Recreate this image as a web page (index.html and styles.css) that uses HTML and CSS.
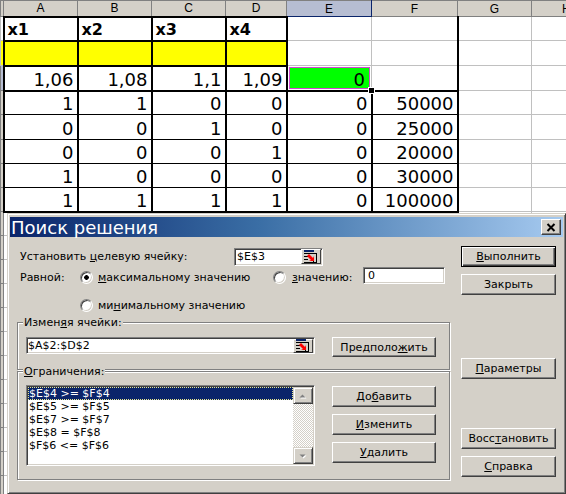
FILE: index.html
```html
<!DOCTYPE html>
<html lang="ru">
<head>
<meta charset="utf-8">
<title>Поиск решения</title>
<link rel="stylesheet" href="styles.css">
</head>
<body>
<div class="page">
  <table class="sheet">
    <colgroup>
      <col class="c-rh"><col class="c-a"><col class="c-b"><col class="c-c"><col class="c-d"><col class="c-e"><col class="c-f"><col class="c-g"><col class="c-h">
    </colgroup>
    <tr class="r-hd">
      <td class="hd rhd"></td><td class="hd">A</td><td class="hd">B</td><td class="hd">C</td><td class="hd">D</td><td class="hd hd-sel">E</td><td class="hd">F</td><td class="hd">G</td><td class="hd hd-h">H</td>
    </tr>
    <tr class="r24">
      <td class="rh rh-w"></td><td class="k lab">x1</td><td class="k lab">x2</td><td class="k lab">x3</td><td class="k lab">x4</td><td></td><td class="kr"></td><td></td><td></td>
    </tr>
    <tr class="r25">
      <td class="rh rh-y"></td><td class="k yel"></td><td class="k yel"></td><td class="k yel"></td><td class="k yel"></td><td></td><td class="kr"></td><td></td><td></td>
    </tr>
    <tr class="r25">
      <td class="rh rh-sel"></td><td class="k">1,06</td><td class="k">1,08</td><td class="k">1,1</td><td class="k">1,09</td><td class="act">0<span class="handle"></span></td><td class="kr kb"></td><td></td><td></td>
    </tr>
    <tr class="r24">
      <td class="rh"></td><td class="m kt">1</td><td class="m kt">1</td><td class="m kt">0</td><td class="m kt">0</td><td class="m kt">0</td><td class="m kt">50000</td><td></td><td></td>
    </tr>
    <tr class="r25">
      <td class="rh"></td><td class="m">0</td><td class="m">0</td><td class="m">1</td><td class="m">0</td><td class="m">0</td><td class="m">25000</td><td></td><td></td>
    </tr>
    <tr class="r24">
      <td class="rh"></td><td class="m">0</td><td class="m">0</td><td class="m">0</td><td class="m">1</td><td class="m">0</td><td class="m">20000</td><td></td><td></td>
    </tr>
    <tr class="r24">
      <td class="rh"></td><td class="m">1</td><td class="m">0</td><td class="m">0</td><td class="m">0</td><td class="m">0</td><td class="m">30000</td><td></td><td></td>
    </tr>
    <tr class="r24">
      <td class="rh"></td><td class="m mb">1</td><td class="m mb">1</td><td class="m mb">1</td><td class="m mb">1</td><td class="m mb">0</td><td class="m mb">100000</td><td></td><td></td>
    </tr>
    <tr class="r24"><td class="rh"></td><td></td><td></td><td></td><td></td><td></td><td></td><td></td><td></td></tr>
    <tr class="r24"><td class="rh"></td><td></td><td></td><td></td><td></td><td></td><td></td><td></td><td></td></tr>
    <tr class="r24"><td class="rh"></td><td></td><td></td><td></td><td></td><td></td><td></td><td></td><td></td></tr>
    <tr class="r24"><td class="rh"></td><td></td><td></td><td></td><td></td><td></td><td></td><td></td><td></td></tr>
    <tr class="r24"><td class="rh"></td><td></td><td></td><td></td><td></td><td></td><td></td><td></td><td></td></tr>
    <tr class="r24"><td class="rh"></td><td></td><td></td><td></td><td></td><td></td><td></td><td></td><td></td></tr>
    <tr class="r24"><td class="rh"></td><td></td><td></td><td></td><td></td><td></td><td></td><td></td><td></td></tr>
    <tr class="r24"><td class="rh"></td><td></td><td></td><td></td><td></td><td></td><td></td><td></td><td></td></tr>
    <tr class="r24"><td class="rh"></td><td></td><td></td><td></td><td></td><td></td><td></td><td></td><td></td></tr>
    <tr class="r24"><td class="rh"></td><td></td><td></td><td></td><td></td><td></td><td></td><td></td><td></td></tr>
    <tr class="r24"><td class="rh"></td><td></td><td></td><td></td><td></td><td></td><td></td><td></td><td></td></tr>
    <tr class="r24"><td class="rh"></td><td></td><td></td><td></td><td></td><td></td><td></td><td></td><td></td></tr>
  </table>

  <div class="dlg">
    <div class="title">
      <span class="title-text">Поиск решения</span>
      <button class="close" type="button" aria-label="Закрыть">
        <svg width="10" height="9" viewBox="0 0 10 9"><path d="M1.5 1 L8.5 8 M8.5 1 L1.5 8" stroke="#000" stroke-width="2" fill="none"/></svg>
      </button>
    </div>
    <div class="dbody">
      <div class="left">
        <div class="row r-target">
          <span class="lbl-target">Установить <u>ц</u>елевую ячейку:</span>
          <div class="field f-target">
            <span class="fval">$E$3</span>
            <span class="ref">
              <svg width="16" height="13" viewBox="0 0 16 13">
                <rect x="1" y="0" width="10" height="2" fill="#0a246a"/>
                <path d="M1 3.5h12M1 6.5h4M1 9.5h4M1 12.5h13M10.5 9v4M13.5 3v10" stroke="#000" stroke-width="1" fill="none"/>
                <path d="M6 4 L10 8 L11 6 L11 11 L6 11 L8 10 L4 6 Z" fill="#ff0000"/>
              </svg>
            </span>
          </div>
        </div>
        <div class="row r-eq">
          <span class="lbl-eq">Равной:</span>
          <span class="radio on"></span>
          <span class="rl w-max"><u>м</u>аксимальному значению</span>
          <span class="radio"></span>
          <span class="rl w-val"><u>з</u>начению:</span>
          <div class="field f-val"><span class="fval">0</span></div>
        </div>
        <div class="row r-min">
          <span class="radio"></span>
          <span class="rl">ми<u>н</u>имальному значению</span>
        </div>
        <div class="group g1">
          <span class="legend">Измен<u>я</u>я ячейки:</span>
          <div class="grow g1row">
            <div class="field f-cells">
              <span class="fval">$A$2:$D$2</span>
              <span class="ref">
                <svg width="16" height="13" viewBox="0 0 16 13">
                  <rect x="1" y="0" width="10" height="2" fill="#0a246a"/>
                  <path d="M1 3.5h12M1 6.5h4M1 9.5h4M1 12.5h13M10.5 9v4M13.5 3v10" stroke="#000" stroke-width="1" fill="none"/>
                  <path d="M6 4 L10 8 L11 6 L11 11 L6 11 L8 10 L4 6 Z" fill="#ff0000"/>
                </svg>
              </span>
            </div>
            <button class="btn b-guess" type="button">Предполо<u>ж</u>ить</button>
          </div>
        </div>
        <div class="group g2">
          <span class="legend"><u>О</u>граничения:</span>
          <div class="grow g2row">
            <div class="list">
              <div class="items">
                <div class="item sel">$E$4 &gt;= $F$4</div>
                <div class="item">$E$5 &gt;= $F$5</div>
                <div class="item">$E$7 &gt;= $F$7</div>
                <div class="item">$E$8 = $F$8</div>
                <div class="item">$F$6 &lt;= $F$6</div>
              </div>
              <div class="sb">
                <span class="sbbtn">
                  <svg width="9" height="6" viewBox="0 0 9 6"><path d="M1.5 5.5 L4.5 2.5 L7.5 5.5 Z" fill="#fff"/><path d="M0.5 4.5 L3.5 1.5 L6.5 4.5 Z" fill="#808080"/></svg>
                </span>
                <span class="track"></span>
                <span class="sbbtn">
                  <svg width="9" height="6" viewBox="0 0 9 6"><path d="M1.5 2.5 L4.5 5.5 L7.5 2.5 Z" fill="#fff"/><path d="M0.5 1.5 L3.5 4.5 L6.5 1.5 Z" fill="#808080"/></svg>
                </span>
              </div>
            </div>
            <div class="bcol">
              <button class="btn b-add" type="button">До<u>б</u>авить</button>
              <button class="btn b-edit" type="button"><u>И</u>зменить</button>
              <button class="btn b-del" type="button"><u>У</u>далить</button>
            </div>
          </div>
        </div>
      </div>
      <div class="right">
        <button class="btn def b-run" type="button"><u>В</u>ыполнить</button>
        <button class="btn b-close" type="button">Закрыть</button>
        <button class="btn b-params" type="button"><u>П</u>араметры</button>
        <button class="btn b-restore" type="button">Восс<u>т</u>ановить</button>
        <button class="btn b-help" type="button"><u>С</u>правка</button>
      </div>
    </div>
  </div>
</div>
</body>
</html>
```
FILE: styles.css
```css
html, body {
  margin: 0;
  padding: 0;
  width: 566px;
  height: 494px;
  overflow: hidden;
  background: #fff;
}

.page {
  position: relative;
  width: 566px;
  height: 494px;
  overflow: hidden;
}

/* ---------- spreadsheet ---------- */
.sheet {
  border-collapse: collapse;
  table-layout: fixed;
  width: 605px;
  font-family: "DejaVu Sans", sans-serif;
  font-size: 18px;
  color: #000;
}

.c-rh { width: 3px; }
.c-a, .c-b, .c-c { width: 74px; }
.c-d { width: 61px; }
.c-e { width: 85px; }
.c-f { width: 86px; }
.c-g, .c-h { width: 74px; }

.r-hd { height: 16px; }
.r24 { height: 24px; }
.r25 { height: 25px; }

.sheet td {
  border: 1px solid #c0c0c0;
  padding: 0 3px;
  vertical-align: bottom;
  text-align: right;
  white-space: nowrap;
  overflow: hidden;
  box-sizing: border-box;
}

.sheet td.hd {
  background: #d4d0c8;
  border: 1px solid #808080;
  font-family: "Liberation Sans", Arial, sans-serif;
  font-size: 12px;
  text-align: center;
  vertical-align: middle;
  padding: 0;
  line-height: 14px;
}

.sheet td.hd-h {
  text-align: left;
  padding-left: 30px;
}

.sheet td.hd-sel {
  background: #b6bdd2;
  border-right-color: #0a246a;
  border-bottom-color: #0a246a;
}

.sheet td.rh {
  padding: 0;
  background: #d4d0c8;
  border: 1px solid #808080;
}
.sheet td.rh-w { background: #fff; border-color: #c0c0c0; }
.sheet td.rh-y { background: #ffff00; border-color: #c0c0c0; }
.sheet td.rh-sel { background: #b6bdd2; }

.sheet td.k {
  border: 2px solid #000;
}

.sheet td.lab {
  font-weight: bold;
  font-size: 16px;
  text-align: left;
  padding-bottom: 1px;
}

.sheet td.yel { background: #ffff00; }

.sheet td.kr { border-right: 2px solid #000; }
.sheet td.kb { border-bottom: 2px solid #000; }

.sheet td.act {
  position: relative;
  overflow: visible;
  background: #00ff00;
  box-shadow: inset 0 0 0 1px #fff, inset 0 0 0 2px #d048d0;
  padding-right: 6px;
}

.handle {
  position: absolute;
  right: -4px;
  bottom: -4px;
  width: 5px;
  height: 5px;
  background: #000;
  border: 1px solid #fff;
  z-index: 2;
}

.sheet td.m {
  border-top: 1px solid #000;
  border-bottom: 1px solid #000;
  border-left: 2px solid #000;
  border-right: 2px solid #000;
}
.sheet td.kt { border-top: 2px solid #000; }
.sheet td.mb { border-bottom: 2px solid #000; }

/* ---------- dialog ---------- */
.dlg {
  position: absolute;
  left: 7px;
  top: 213px;
  width: 559px;
  height: 281px;
  box-sizing: border-box;
  background: #d4d0c8;
  border: 1px solid;
  border-color: #d4d0c8 #404040 #404040 #d4d0c8;
  box-shadow: inset 1px 1px 0 #fff, inset -1px -1px 0 #808080;
  padding: 3px 2px 0 2px;
  font-family: "DejaVu Sans", sans-serif;
  font-size: 11px;
  color: #000;
  z-index: 5;
}

.title {
  height: 20px;
  box-sizing: border-box;
  display: flex;
  justify-content: space-between;
  align-items: flex-start;
  padding: 2px 2px 0 1px;
  background: linear-gradient(90deg, #0a246a 0%, #3a6ea5 45%, #a6caf0 100%);
  color: #fff;
  font-size: 18px;
  line-height: 18px;
}

.title-text {
  white-space: nowrap;
}

.close {
  width: 20px;
  height: 16px;
  padding: 0;
  margin: 0;
  box-sizing: border-box;
  background: #d4d0c8;
  border: 1px solid;
  border-color: #fff #404040 #404040 #fff;
  box-shadow: inset -1px -1px 0 #808080;
  display: flex;
  align-items: center;
  justify-content: center;
}

.dbody {
  display: flex;
  padding-left: 7px;
}

.left {
  width: 434px;
  display: flex;
  flex-direction: column;
}

.right {
  width: 95px;
  margin-left: 10px;
  display: flex;
  flex-direction: column;
}

.row {
  display: flex;
  align-items: center;
  white-space: nowrap;
}

.r-target {
  margin-top: 9px;
  height: 21px;
}

.lbl-target {
  width: 217px;
  padding-left: 3px;
  box-sizing: border-box;
}

.r-eq {
  height: 20px;
}

.lbl-eq {
  width: 63px;
  padding-left: 3px;
  box-sizing: border-box;
}

.r-min {
  margin-top: 8px;
  height: 20px;
  padding-left: 63px;
}

.radio {
  width: 13px;
  height: 13px;
  box-sizing: border-box;
  border-radius: 50%;
  border: 1px solid;
  border-color: #808080 #fff #fff #808080;
  background: #fff;
  box-shadow: inset 1px 1px 0 #404040, inset -1px -1px 0 #d4d0c8;
  flex: none;
}

.radio.on {
  background: radial-gradient(circle at 50% 50%, #000 0, #000 2px, #fff 2.6px);
}

.rl {
  margin-left: 5px;
}

.w-max {
  width: 175px;
}

.w-val {
  margin-left: 6px;
  width: 71px;
}

.field {
  display: flex;
  align-items: center;
  box-sizing: border-box;
  background: #fff;
  border: 1px solid;
  border-color: #808080 #fff #fff #808080;
  box-shadow: inset 1px 1px 0 #404040, inset -1px -1px 0 #d4d0c8;
  padding: 1px 1px 1px 2px;
}

.fval {
  flex: 1;
  white-space: nowrap;
}

.f-target {
  width: 89px;
  height: 18px;
}

.f-val {
  align-self: flex-start;
  width: 82px;
  height: 17px;
  padding-left: 4px;
}

.f-cells {
  width: 289px;
  height: 17px;
  padding-left: 1px;
}

.ref {
  width: 20px;
  height: 15px;
  box-sizing: border-box;
  background: #d4d0c8;
  border: 1px solid;
  border-color: #fff #404040 #404040 #fff;
  display: flex;
  align-items: center;
  justify-content: center;
  flex: none;
}

.f-cells .ref {
  height: 14px;
}

.group {
  box-sizing: border-box;
  width: 433px;
  border: 1px solid #808080;
  box-shadow: 1px 1px 0 #fff, inset 1px 1px 0 #fff;
}

.g1 {
  margin-top: 7px;
  height: 48px;
}

.g2 {
  margin-top: 1px;
  height: 109px;
}

.legend {
  display: block;
  width: fit-content;
  margin: -7px 0 0 5px;
  padding: 0 1px;
  line-height: 13px;
  background: #d4d0c8;
  white-space: nowrap;
}

.grow {
  display: flex;
  align-items: flex-start;
  padding-left: 8px;
}

.g1row {
  margin-top: 8px;
}

.g2row {
  margin-top: 7px;
}

.btn {
  font: inherit;
  color: #000;
  margin: 0;
  padding: 0;
  height: 21px;
  box-sizing: border-box;
  display: flex;
  align-items: center;
  justify-content: center;
  background: #d4d0c8;
  border: 1px solid;
  border-color: #fff #404040 #404040 #fff;
  box-shadow: inset -1px -1px 0 #808080;
  white-space: nowrap;
}

.btn.def {
  border-color: #000;
  box-shadow: inset 1px 1px 0 #fff, inset -1px -1px 0 #404040, inset -2px -2px 0 #808080;
}

.b-guess {
  width: 104px;
  height: 20px;
  margin-left: 17px;
}

.b-run { margin-top: 9px; }
.b-close { margin-top: 7px; }
.b-params { margin-top: 63px; }
.b-restore { margin-top: 49px; }
.b-help { margin-top: 7px; }

.list {
  display: flex;
  width: 289px;
  height: 81px;
  box-sizing: border-box;
  border: 1px solid;
  border-color: #808080 #fff #fff #808080;
  box-shadow: inset 1px 1px 0 #404040, inset -1px -1px 0 #d4d0c8;
  background: #fff;
  padding: 1px;
}

.items {
  flex: 1;
  background: #fff;
}

.item {
  height: 13px;
  line-height: 13px;
  padding-left: 1px;
  white-space: nowrap;
}

.item.sel {
  background: #0a246a;
  color: #fff;
  outline: 1px dotted #e8e890;
  outline-offset: -1px;
}

.sb {
  width: 20px;
  display: flex;
  flex-direction: column;
}

.sbbtn {
  height: 17px;
  box-sizing: border-box;
  background: #d4d0c8;
  border: 1px solid;
  border-color: #d4d0c8 #404040 #404040 #d4d0c8;
  box-shadow: inset 1px 1px 0 #fff, inset -1px -1px 0 #808080;
  display: flex;
  align-items: center;
  justify-content: center;
}

.track {
  flex: 1;
  background-color: #fff;
  background-image: repeating-conic-gradient(#d4d0c8 0 25%, #fff 0 50%);
  background-size: 2px 2px;
}

.bcol {
  display: flex;
  flex-direction: column;
  margin-left: 17px;
  width: 104px;
}

.bcol .btn {
  width: 104px;
}

.b-add { margin-top: 1px; }
.b-edit { margin-top: 7px; }
.b-del { margin-top: 7px; }
```
